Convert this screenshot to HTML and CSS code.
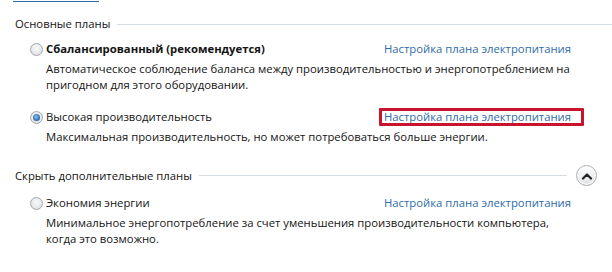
FILE: index.html
```html
<!DOCTYPE html>
<html lang="ru">
<head>
<meta charset="utf-8">
<link rel="stylesheet" href="styles.css">
</head>
<body>
<div class="page">
  <div class="top-link"></div>

  <div class="group-head first">
    <span class="group-title">Основные планы</span>
    <span class="rule"></span>
  </div>

  <div class="plan">
    <div class="plan-row">
      <span class="radio"></span>
      <span class="plan-name bold">Сбалансированный (рекомендуется)</span>
      <a class="plan-link">Настройка плана электропитания</a>
    </div>
    <div class="plan-desc">Автоматическое соблюдение баланса между производительностью и энергопотреблением на пригодном для этого оборудовании.</div>
  </div>

  <div class="plan second">
    <div class="plan-row">
      <span class="radio checked"></span>
      <span class="plan-name">Высокая производительность</span>
      <a class="plan-link highlighted">Настройка плана электропитания<span class="mark"></span></a>
    </div>
    <div class="plan-desc">Максимальная производительность, но может потребоваться больше энергии.</div>
  </div>

  <div class="group-head extra">
    <span class="group-title">Скрыть дополнительные планы</span>
    <span class="rule short"></span>
    <span class="collapse">
      <svg width="12" height="8" viewBox="0 0 12 8"><path d="M2 6.5 L6 2.5 L10 6.5" fill="none" stroke="#222" stroke-width="2.2" stroke-linecap="round" stroke-linejoin="round"/></svg>
    </span>
  </div>

  <div class="plan third">
    <div class="plan-row">
      <span class="radio"></span>
      <span class="plan-name">Экономия энергии</span>
      <a class="plan-link">Настройка плана электропитания</a>
    </div>
    <div class="plan-desc">Минимальное энергопотребление за счет уменьшения производительности компьютера, когда это возможно.</div>
  </div>
</div>
</body>
</html>
```

FILE: styles.css
```css
html, body {
  margin: 0;
  padding: 0;
  background: #ffffff;
}

body {
  font-family: "Open Sans", "Noto Sans", sans-serif;
  font-size: 11.3px;
  line-height: 16px;
  color: #141414;
  width: 612px;
  height: 272px;
  overflow: hidden;
}

.page {
  position: relative;
  padding-left: 15px;
}

.top-link {
  width: 86px;
  height: 1px;
  margin-left: -2px;
  background: #2a6aa8;
  margin-top: 1px;
}

.group-head {
  display: flex;
  align-items: center;
  gap: 7px;
}

.group-head.first {
  margin-top: 14px;
}

.group-head.extra {
  margin-top: 20px;
  padding-right: 15px;
}

.group-title {
  white-space: nowrap;
}

.rule {
  flex: 1;
  height: 1px;
  background: #d6dde3;
}

.rule.short {
  margin-right: 2px;
}

.collapse {
  width: 21px;
  height: 21px;
  border-radius: 50%;
  border: 1px solid #a9adb2;
  background: linear-gradient(#fdfdfd, #e0e2e5);
  box-sizing: border-box;
  display: flex;
  align-items: center;
  justify-content: center;
  box-shadow: inset 0 0 0 1px #ffffff;
}

.plan {
  padding-left: 15px;
  margin-top: 9px;
}

.plan.second {
  margin-top: 16px;
}

.plan.third {
  margin-top: 9px;
}

.plan-row {
  display: flex;
  align-items: center;
  height: 16px;
}

.radio {
  width: 13px;
  height: 13px;
  box-sizing: border-box;
  border-radius: 50%;
  border: 1px solid #a3a7ac;
  background: radial-gradient(circle at 50% 40%, #fafafa, #d9dbde);
  margin-right: 3px;
  flex: none;
  position: relative;
}

.radio.checked::after {
  content: "";
  position: absolute;
  left: 2px;
  top: 2px;
  width: 7px;
  height: 7px;
  border-radius: 50%;
  background: radial-gradient(circle at 45% 40%, #8cc4ee, #2b64a6 70%, #1c4a86);
}

.plan-name {
  flex: 1;
}

.bold {
  font-weight: 700;
}

.plan-link {
  color: #2f6ca8;
  margin-right: 41px;
  white-space: nowrap;
  position: relative;
}

.mark {
  position: absolute;
  left: -5px;
  right: -13px;
  top: -1px;
  bottom: -1px;
  border: 3px solid #c8142c;
  border-radius: 1px;
}

.plan-desc {
  padding-left: 16px;
  margin-top: 4px;
  padding-right: 30px;
}
```
